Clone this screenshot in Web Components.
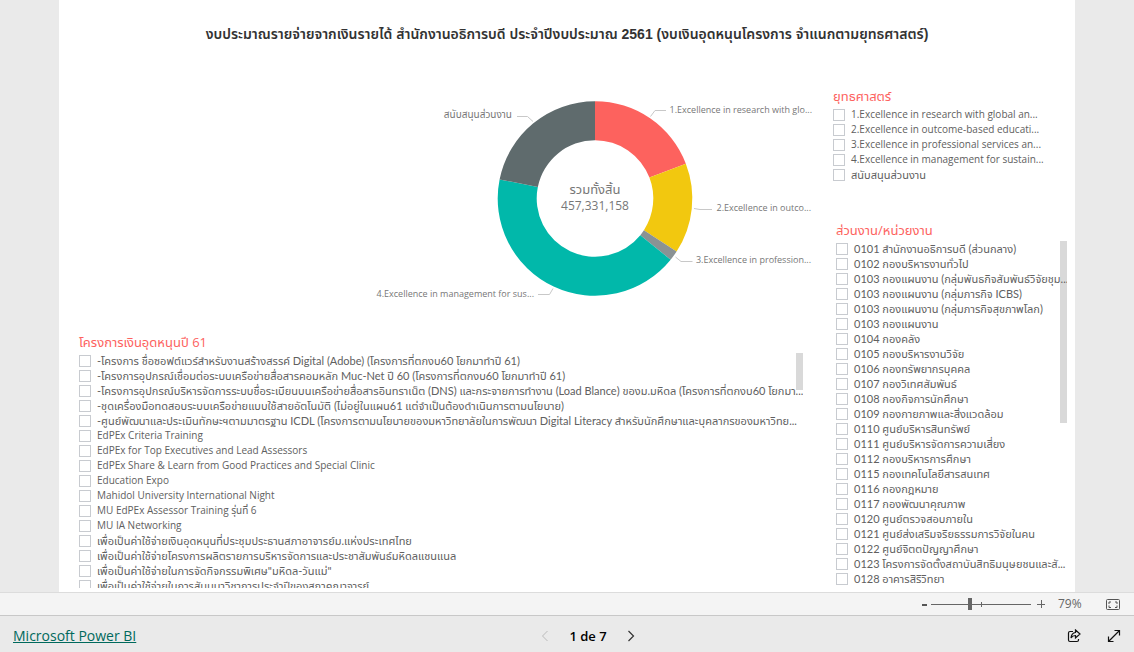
<!DOCTYPE html>
<html lang="th">
<head>
<meta charset="utf-8">
<title>Microsoft Power BI</title>
<style>
  html, body { margin: 0; height: 100%; }
  body { font-family: "Open Sans", "Noto Sans Thai", "Noto Sans", sans-serif; color: #606060; background: #eaeaea; overflow: hidden;
    --label-font: Lato, "Noto Sans Thai", "Noto Sans", sans-serif; }
</style>
</head>
<body>
<report-viewer>
  <report-page>
    <span slot="title">งบประมาณรายจ่ายจากเงินรายได้ สำนักงานอธิการบดี ประจำปีงบประมาณ 2561 (งบเงินอุดหนุนโครงการ จำแนกตามยุทธศาสตร์)</span>
    <donut-chart slot="chart"></donut-chart>
    <list-slicer slot="projects" heading="โครงการเงินอุดหนุนปี 61" style="--thumb: 37px">
      <slicer-item>-โครงการ ชื่อซอฟต์แวร์สำหรับงานสร้างสรรค์ Digital (Adobe) (โครงการที่ตกงบ60 โยกมาทำปี 61)</slicer-item>
      <slicer-item>-โครงการอุปกรณ์เชื่อมต่อระบบเครือข่ายสื่อสารคอมหลัก Muc-Net ปี 60 (โครงการที่ตกงบ60 โยกมาทำปี 61)</slicer-item>
      <slicer-item>-โครงการอุปกรณ์บริหารจัดการระบบชื่อระเบียนบนเครือข่ายสื่อสารอินทราเน็ต (DNS) และกระจายการทำงาน (Load Blance) ของม.มหิดล (โครงการที่ตกงบ60 โยกมา...</slicer-item>
      <slicer-item>-ชุดเครื่องมือทดสอบระบบเครือข่ายแบบใช้สายอัตโนมัติ (ไม่อยู่ในแผน61 แต่จำเป็นต้องดำเนินการตามนโยบาย)</slicer-item>
      <slicer-item>-ศูนย์พัฒนาและประเมินทักษะฯตามมาตรฐาน ICDL (โครงการตามนโยบายของมหาวิทยาลัยในการพัฒนา Digital Literacy สำหรับนักศึกษาและบุคลากรของมหาวิทย...</slicer-item>
      <slicer-item latin>EdPEx Criteria Training</slicer-item>
      <slicer-item latin>EdPEx for Top Executives and Lead Assessors</slicer-item>
      <slicer-item latin>EdPEx Share &amp; Learn from Good Practices and Special Clinic</slicer-item>
      <slicer-item latin>Education Expo</slicer-item>
      <slicer-item latin>Mahidol University International Night</slicer-item>
      <slicer-item latin>MU EdPEx Assessor Training รุ่นที่ 6</slicer-item>
      <slicer-item latin>MU IA Networking</slicer-item>
      <slicer-item>เพื่อเป็นค่าใช้จ่ายเงินอุดหนุนที่ประชุมประธานสภาอาจารย์ม.แห่งประเทศไทย</slicer-item>
      <slicer-item>เพื่อเป็นค่าใช้จ่ายโครงการผลิตรายการบริหารจัดการและประชาสัมพันธ์มหิดลแชนแนล</slicer-item>
      <slicer-item>เพื่อเป็นค่าใช้จ่ายในการจัดกิจกรรมพิเศษ"มหิดล-วันแม่"</slicer-item>
      <slicer-item>เพื่อเป็นค่าใช้จ่ายในการสัมมนาวิชาการประจำปีของสภาคณาจารย์</slicer-item>
    </list-slicer>
    <list-slicer slot="strategy" heading="ยุทธศาสตร์">
      <slicer-item latin>1.Excellence in research with global an...</slicer-item>
      <slicer-item latin>2.Excellence in outcome-based educati...</slicer-item>
      <slicer-item latin>3.Excellence in professional services an...</slicer-item>
      <slicer-item latin>4.Excellence in management for sustain...</slicer-item>
      <slicer-item>สนับสนุนส่วนงาน</slicer-item>
    </list-slicer>
    <list-slicer slot="units" heading="ส่วนงาน/หน่วยงาน" style="--thumb: 182px">
      <slicer-item>0101 สำนักงานอธิการบดี (ส่วนกลาง)</slicer-item>
      <slicer-item>0102 กองบริหารงานทั่วไป</slicer-item>
      <slicer-item>0103 กองแผนงาน (กลุ่มพันธกิจสัมพันธ์วิจัยชุม...</slicer-item>
      <slicer-item>0103 กองแผนงาน (กลุ่มภารกิจ ICBS)</slicer-item>
      <slicer-item>0103 กองแผนงาน (กลุ่มภารกิจสุขภาพโลก)</slicer-item>
      <slicer-item>0103 กองแผนงาน</slicer-item>
      <slicer-item>0104 กองคลัง</slicer-item>
      <slicer-item>0105 กองบริหารงานวิจัย</slicer-item>
      <slicer-item>0106 กองทรัพยากรบุคคล</slicer-item>
      <slicer-item>0107 กองวิเทศสัมพันธ์</slicer-item>
      <slicer-item>0108 กองกิจการนักศึกษา</slicer-item>
      <slicer-item>0109 กองกายภาพและสิ่งแวดล้อม</slicer-item>
      <slicer-item>0110 ศูนย์บริหารสินทรัพย์</slicer-item>
      <slicer-item>0111 ศูนย์บริหารจัดการความเสี่ยง</slicer-item>
      <slicer-item>0112 กองบริหารการศึกษา</slicer-item>
      <slicer-item>0115 กองเทคโนโลยีสารสนเทศ</slicer-item>
      <slicer-item>0116 กองกฎหมาย</slicer-item>
      <slicer-item>0117 กองพัฒนาคุณภาพ</slicer-item>
      <slicer-item>0120 ศูนย์ตรวจสอบภายใน</slicer-item>
      <slicer-item>0121 ศูนย์ส่งเสริมจริยธรรมการวิจัยในคน</slicer-item>
      <slicer-item>0122 ศูนย์จิตตปัญญาศึกษา</slicer-item>
      <slicer-item>0123 โครงการจัดตั้งสถาบันสิทธิมนุษยชนและสั...</slicer-item>
      <slicer-item>0128 อาคารสิริวิทยา</slicer-item>
    </list-slicer>
  </report-page>
  <zoom-bar slot="zoom"></zoom-bar>
  <page-footer slot="footer"></page-footer>
</report-viewer>

<script>
class BaseElement extends HTMLElement {
  constructor() {
    super();
    this.attachShadow({ mode: 'open' }).innerHTML = this.constructor.markup;
  }
}

customElements.define('report-viewer', class extends BaseElement {
  static markup = `
    <style>
      :host { display: flex; flex-direction: column; height: 100vh; }
      main { flex: 1; min-height: 0; display: flex; padding: 0 59px; }
    </style>
    <main><slot></slot></main>
    <slot name="zoom"></slot>
    <slot name="footer"></slot>`;
});

customElements.define('report-page', class extends BaseElement {
  static markup = `
    <style>
      :host { flex: 1; min-width: 0; min-height: 0; display: flex; flex-direction: column; gap: 38px; box-sizing: border-box;
        padding: 24px 8px 4px 20px; background: #fff; }
      h1 { margin: 0 12px 0 0; font: 600 14px/20px "Liberation Sans", "Noto Sans Thai", sans-serif; color: #333; text-align: center; white-space: nowrap; }
      .columns { flex: 1; min-height: 0; display: grid; grid-template-columns: minmax(0, 1fr) 234px; column-gap: 21px; }
      .left, .right { min-height: 0; display: flex; flex-direction: column; }
      .left { gap: 27px; padding-top: 1px; }
      .right { gap: 38px; padding-top: 4px; }
      .chart { display: flex; justify-content: flex-end; }
      .projects { flex: 1; min-height: 0; display: flex; padding-right: 9px; }
      .units { flex: 1; min-height: 0; display: flex; padding-left: 3px; }
    </style>
    <h1><slot name="title"></slot></h1>
    <div class="columns">
      <div class="left">
        <div class="chart"><slot name="chart"></slot></div>
        <div class="projects"><slot name="projects"></slot></div>
      </div>
      <div class="right">
        <slot name="strategy"></slot>
        <div class="units"><slot name="units"></slot></div>
      </div>
    </div>`;
});

customElements.define('list-slicer', class extends BaseElement {
  static markup = `
    <style>
      :host { flex: 1 1 auto; min-width: 0; min-height: 0; display: flex; flex-direction: column; }
      :host([slot="strategy"]) { flex: none; }
      h2 { margin: 0 0 1px; flex: none; font-size: 13px; line-height: 20px; font-weight: 400; color: #fd625e; white-space: nowrap; }
      .body { flex: 1; min-height: 0; position: relative; overflow: hidden; }
      .thumb { position: absolute; top: 0; right: 0; width: 7px; height: var(--thumb, 0); background: #d9d9d9; }
    </style>
    <h2></h2>
    <div class="body" role="group"><div class="thumb"></div><slot></slot></div>`;
  connectedCallback() {
    const heading = this.getAttribute('heading');
    this.shadowRoot.querySelector('h2').textContent = heading;
    this.shadowRoot.querySelector('.body').setAttribute('aria-label', heading);
  }
});

customElements.define('slicer-item', class extends BaseElement {
  static markup = `
    <style>
      :host { display: block; height: 15px; position: relative; }
      label { display: flex; align-items: center; gap: 6px; height: 15px; font-family: var(--label-font); font-size: 11px; line-height: 15px; white-space: nowrap; }
      :host([latin]) label { font-family: inherit; font-size: 10px; }
      input { appearance: none; flex: none; box-sizing: border-box; width: 12px; height: 12px; margin: 0; border: 1px solid #c8cbd0; background: #fff; }
      input:checked { background: #666; }
    </style>
    <label><input type="checkbox"><span><slot></slot></span></label>`;
});

customElements.define('donut-chart', class extends BaseElement {
  static markup = `
    <style>
      :host { display: block; }
      svg { display: block; width: 442px; height: 222px; }
      text { font-size: 9px; fill: #777; }
      .thai { font-size: 10px; }
      .total { font-size: 12px; text-anchor: middle; }
      .caption { font-size: 13px; }
      .end { text-anchor: end; }
      polyline { fill: none; stroke: #c8c8c8; }
    </style>
    <svg viewBox="370 83 442 222" role="img" aria-label="รวมทั้งสิ้น 457,331,158">
      <g class="slices"></g>
      <polyline points="650.5,116.5 655,110.5 666,110.5"/>
      <polyline points="694,208.5 700,209.5 712,209.5"/>
      <polyline points="675.5,257 681,261.5 692.5,261.5"/>
      <polyline points="553,288.5 549.5,294.5 538,294.5"/>
      <polyline points="533,121.5 527.5,116.5 517,116.5"/>
      <text class="end" x="812" y="113">1.Excellence in research with glo...</text>
      <text class="end" x="811" y="211">2.Excellence in outco...</text>
      <text class="end" x="811" y="263">3.Excellence in profession...</text>
      <text class="end" x="534" y="297">4.Excellence in management for sus...</text>
      <text class="end thai" x="512" y="118">สนับสนุนส่วนงาน</text>
      <text class="total caption" x="595" y="194">รวมทั้งสิ้น</text>
      <text class="total" x="595" y="210">457,331,158</text>
    </svg>`;
  connectedCallback() {
    const slices = [[0, 69, '#fd625e'], [69, 123, '#f2c80f'], [123, 129, '#8a9294'], [129, 281.3, '#01b8aa'], [281.3, 360, '#5f6b6d']];
    const cx = 595, cy = 198.5, outer = 97.3, inner = 58.3;
    const point = (radius, angle) => {
      const t = angle * Math.PI / 180;
      return `${(cx + radius * Math.sin(t)).toFixed(2)} ${(cy - radius * Math.cos(t)).toFixed(2)}`;
    };
    this.shadowRoot.querySelector('.slices').innerHTML = slices.map(([from, to, colour]) => {
      const large = to - from > 180 ? 1 : 0;
      return `<path fill="${colour}" d="M${point(outer, from)}A${outer} ${outer} 0 ${large} 1 ${point(outer, to)}L${point(inner, to)}A${inner} ${inner} 0 ${large} 0 ${point(inner, from)}Z"/>`;
    }).join('');
  }
});

customElements.define('zoom-bar', class extends BaseElement {
  static markup = `
    <style>
      :host { display: flex; align-items: center; justify-content: flex-end; box-sizing: border-box; height: 24px; padding-right: 13px;
        background: #f4f4f4; border-top: 1px solid #dcdcdc; border-bottom: 1px solid #c8c8c8; }
      button { display: flex; align-items: center; justify-content: center; width: 20px; height: 20px; margin: 0; padding: 0; border: 0; background: none; }
      .minus { width: 14px; }
      svg { display: block; }
      input { appearance: none; width: 100px; height: 12px; margin: 0;
        background: linear-gradient(#666, #666) 0 6px / 100% 1px no-repeat, linear-gradient(#666, #666) 50px 4px / 1px 5px no-repeat; }
      input::-webkit-slider-thumb { appearance: none; width: 4px; height: 12px; background: #666; border: 0; }
      output { width: 24px; margin: 0 23px 0 7px; font-size: 12px; line-height: 20px; white-space: nowrap; color: #666; }
      .fit { width: 16px; }
    </style>
    <button class="minus" aria-label="Zoom out"><svg width="5" height="12"><path d="M0 7h5" stroke="#555" stroke-width="2"/></svg></button>
    <input type="range" min="0" max="100" value="39" aria-label="Zoom">
    <button aria-label="Zoom in"><svg width="8" height="8"><path d="M0 4.5h8M4.5 0v8" stroke="#666"/></svg></button>
    <output>79%</output>
    <button class="fit" aria-label="Fit to page"><svg width="14" height="11" fill="none" stroke="#555"><rect x=".5" y=".5" width="13" height="10" rx="1"/><path d="M3 5V3h2M9 3h2v2M11 6.5v2H9M5 8.5H3v-2"/></svg></button>`;
});

customElements.define('page-footer', class extends BaseElement {
  static markup = `
    <style>
      :host { display: grid; grid-template-columns: 1fr auto 1fr; align-items: center; box-sizing: border-box; height: 36px; padding: 0 12px 0 13px;
        background: #eaeaea; }
      a { justify-self: start; font-size: 14px; line-height: 20px; color: #00695c; text-decoration: underline; padding-top: 4px; }
      nav { display: flex; align-items: center; gap: 16px; padding: 3px 0 0 41px; }
      nav span { font-size: 13px; line-height: 20px; font-weight: 600; color: #000; }
      button { display: flex; align-items: center; justify-content: center; width: 16px; height: 16px; margin: 0; padding: 0; border: 0; background: none; }
      .actions { justify-self: end; display: flex; gap: 24px; padding-top: 3px; }
      svg { display: block; fill: none; }
    </style>
    <a href="#">Microsoft Power BI</a>
    <nav aria-label="Pages">
      <button aria-label="Previous page" disabled><svg width="8" height="12" stroke="#bbb"><path d="M6.5 1L1.5 6l5 5"/></svg></button>
      <span>1 de 7</span>
      <button aria-label="Next page"><svg width="8" height="12" stroke="#333" stroke-width="1.2"><path d="M1.5 1l5 5-5 5"/></svg></button>
    </nav>
    <div class="actions">
      <button aria-label="Share"><svg width="14" height="14" stroke="#111" stroke-width="1.2"><path d="M6 2.5H3Q1.5 2.5 1.5 4v7Q1.5 12.5 3 12.5h7q1.5 0 1.5-1.5v-1"/><path d="M8.5 1l4.5 4-4.5 4V6.5Q5.5 6.5 4 9 4.500 4 8.500 3.500z"/></svg></button>
      <button aria-label="Full screen"><svg width="14" height="14" stroke="#111" stroke-width="1.2"><path d="M1.5 12.5l11-11M7.500 1.500h5v5M1.500 7.500v5h5"/></svg></button>
    </div>`;
});
</script>
</body>
</html>
